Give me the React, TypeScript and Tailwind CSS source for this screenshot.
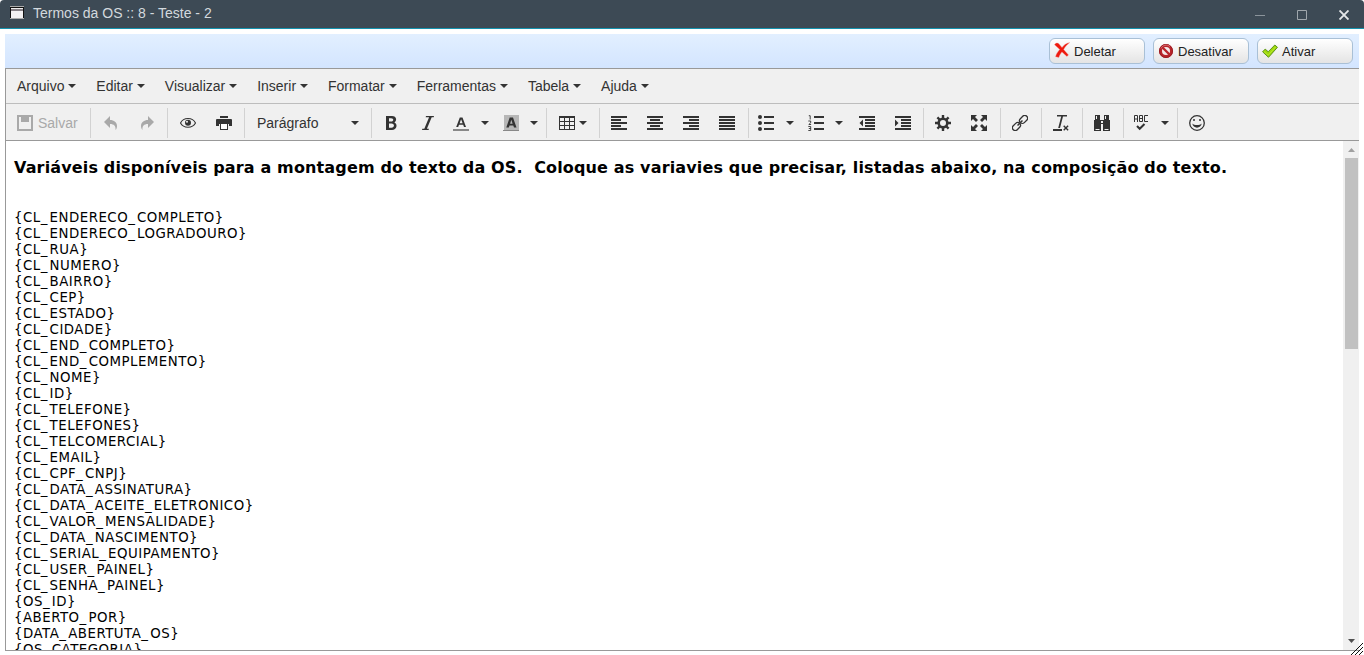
import { Fragment, type ReactNode } from 'react';

const variables = [
  'CL_ENDERECO_COMPLETO', 'CL_ENDERECO_LOGRADOURO', 'CL_RUA', 'CL_NUMERO', 'CL_BAIRRO', 'CL_CEP',
  'CL_ESTADO', 'CL_CIDADE', 'CL_END_COMPLETO', 'CL_END_COMPLEMENTO', 'CL_NOME', 'CL_ID',
  'CL_TELEFONE', 'CL_TELEFONES', 'CL_TELCOMERCIAL', 'CL_EMAIL', 'CL_CPF_CNPJ', 'CL_DATA_ASSINATURA',
  'CL_DATA_ACEITE_ELETRONICO', 'CL_VALOR_MENSALIDADE', 'CL_DATA_NASCIMENTO', 'CL_SERIAL_EQUIPAMENTO',
  'CL_USER_PAINEL', 'CL_SENHA_PAINEL', 'OS_ID', 'ABERTO_POR', 'DATA_ABERTUTA_OS', 'OS_CATEGORIA',
];

const menus = ['Arquivo', 'Editar', 'Visualizar', 'Inserir', 'Formatar', 'Ferramentas', 'Tabela', 'Ajuda'];

function Icon({ children }: { children: ReactNode }) {
  return (
    <svg viewBox="0 0 16 16" className="block h-4 w-4 shrink-0" fill="currentColor">
      {children}
    </svg>
  );
}

function Caret() {
  return (
    <svg viewBox="0 0 8 4" className="block h-1 w-2 shrink-0" fill="currentColor">
      <path d="M0 0h8L4 4z" />
    </svg>
  );
}

function Button({ children, tight }: { children: ReactNode; tight?: boolean }) {
  return (
    <button className={`flex h-[30px] w-9 items-center justify-center ${tight ? 'pr-0.5' : ''}`}>{children}</button>
  );
}

function SplitButton({ children, last }: { children: ReactNode; last?: boolean }) {
  return (
    <div className={`flex h-[30px] items-center pl-[7px] ${last ? 'w-12 gap-[11px]' : 'w-[50px] gap-3'}`}>
      {children}
      <Caret />
    </div>
  );
}

function Group({ children, className = 'px-0.5', end }: { children: ReactNode; className?: string; end?: boolean }) {
  return (
    <div className={`flex h-[30px] items-center ${end ? '' : 'box-content border-r border-[#d2d2d2]'} ${className}`}>
      {children}
    </div>
  );
}

function Action({ icon, label }: { icon: ReactNode; label: string }) {
  return (
    <button className="flex h-[26px] w-24 items-center gap-1 rounded-[6px] border border-[#a9c0d6] bg-linear-to-b from-white to-[#e4e4e4] pl-1 text-[13px] text-[#222]">
      {icon}
      <span className="pt-0.5">{label}</span>
    </button>
  );
}

function Variable({ name }: { name: string }) {
  return (
    <p>
      {`{${name}}`.split('_').map((part, i) => (
        <Fragment key={i}>
          {i > 0 && <span className="tracking-[2.200px]">_</span>}
          {part}
        </Fragment>
      ))}
    </p>
  );
}

export default function App() {
  return (
    <div className="flex h-[655px] w-[1364px] flex-col overflow-hidden bg-white font-['Liberation_Sans',Arial,sans-serif]">
      <header className="flex h-[29px] shrink-0 items-center rounded-t-[4px] border-b border-[#1593ae] bg-[#3d4a55] pr-[15px] pl-[10px] text-[14px] text-[#d3d9de]">
        <svg viewBox="0 0 14 13" className="mt-[-3px] block h-[13px] w-[14px]" shapeRendering="crispEdges">
          <path fill="#111" d="M0 0h14v13H0z" />
          <path fill="#aaa" d="M0 0h14v1H0zM0 12h14v1H0z" />
          <path fill="#eee" d="M1 2h12v1H1z" />
          <path fill="#857f85" d="M1 3h12v2H1z" />
          <path fill="#f2f0f2" d="M1 5h12v7H1z" />
        </svg>
        <h1 className="ml-[9px] flex-1 pb-[2px] whitespace-pre">Termos da OS :: 8 - Teste - 2</h1>
        <svg viewBox="0 0 10 10" className="mt-[2px] block h-[10px] w-[10px]" shapeRendering="crispEdges"><path d="M0 5h10v1H0z" fill="#8b949b" /></svg>
        <svg viewBox="0 0 10 10" className="mt-[2px] ml-8 block h-[10px] w-[10px]"><path d="M.5.5h9v9h-9z" fill="none" stroke="#a0a7ad" /></svg>
        <svg viewBox="0 0 10 10" className="mt-[2px] ml-8 block h-[10px] w-[10px]"><path d="M.5.500l9 9M9.500.5l-9 9" fill="none" stroke="#e4e7e9" strokeWidth="1.900" /></svg>
      </header>

      <main className="relative mt-[5px] ml-[5px] flex h-[617px] w-[1354px] flex-col self-start">
        <div className="flex h-[34px] shrink-0 items-center justify-end gap-2 bg-linear-to-b from-[#e2efff] to-[#d3e5ff] pr-[6px]">
          <Action
            label="Deletar"
            icon={
              <svg viewBox="0 0 16 16" className="mb-0.5 h-4 w-4">
                <path d="M.5 2.800C1.500.5 4.500.6 5.500 2.600l2.500 3C10 3.300 12 1 15.700.6c-2.700 2.200-4.500 4.200-6 6.900l4.800 5.500-1.600 1.500-5-4.600c-1.700 2.200-2.300 3.400-3 5.600L1.500 14.700c.6-2.700 2.200-4.900 4.200-7.300L.5 2.800z" fill="#ee1a0e" stroke="#f4a59c" strokeWidth=".4" />
              </svg>
            }
          />
          <Action
            label="Desativar"
            icon={
              <svg viewBox="0 0 16 16" className="h-4 w-4">
                <circle cx="8" cy="8" r="7" fill="#b9252b" />
                <circle cx="8" cy="8" r="6.500" fill="none" stroke="#9a1c22" />
                <circle cx="8" cy="8" r="4" fill="#f4e9e9" />
                <path d="M4.500 4.500l7 7" stroke="#b9252b" strokeWidth="2.400" />
                <path d="M3 5.500C4.500 2 9 1 12 3.500" fill="none" stroke="#dc7478" strokeWidth="1" />
              </svg>
            }
          />
          <Action
            label="Ativar"
            icon={
              <svg viewBox="0 0 16 16" className="h-4 w-4">
                <path d="M.6 8.800l2.600-2.700 3 2.700 6.600-6.800 2.700 2.300-9 10z" fill="#9fd80c" stroke="#5c941c" strokeLinejoin="round" />
                <path d="M2 8.700l4.200 3.500 7.500-8.300" fill="none" stroke="#bbec35" strokeWidth=".8" />
              </svg>
            }
          />
        </div>

        <section className="flex min-h-0 flex-1 flex-col border-y border-l border-[#999] text-[14px] text-[#333]">
          <nav className="flex h-[35px] shrink-0 items-center gap-[19.900px] border-b border-[#bdbdbd] bg-[#f0f0f0] pl-[11px]">
            {menus.map((m) => (
              <span key={m} className="flex items-center gap-[4px]">
                {m}
                <Caret />
              </span>
            ))}
          </nav>

          <div className="flex h-[37px] shrink-0 items-center border-b border-[#999] bg-[#f0f0f0] pt-1 pb-[2px]">
            <Group className="w-[73px] gap-[5px] pl-[11px] text-[#a9a9a9]">
              <Icon>
                <path fillRule="evenodd" d="M0 0h16v16H0zM2 2v12h12V2h-2v5H4V2z" />
                <path d="M5 2h3v4H5zM10 2h1v4h-1z" />
              </Icon>
              <span>Salvar</span>
            </Group>
            <Group>
              <Button><span className="text-[#a9a9a9]"><Icon><path d="M7 1v4c4 0 7 2.500 7 6 0 1.600-.5 3-1.500 4C13 11 11 9 7 9v4L1 7z" /></Icon></span></Button>
              <Button><span className="text-[#a9a9a9]"><Icon><path d="M9 1v4c-4 0-7 2.500-7 6 0 1.600.5 3 1.500 4C3 11 5 9 9 9v4l6-6z" /></Icon></span></Button>
            </Group>
            <Group>
              <Button>
                <Icon>
                  <path d="M.5 8C3.500 2 12.500 2 15.500 8 12.500 13.600 3.500 13.600.5 8z" fill="none" stroke="currentColor" strokeWidth="1.100" />
                  <circle cx="8" cy="7.700" r="3" />
                  <circle cx="7" cy="6.700" r="1" fill="#f0f0f0" />
                </Icon>
              </Button>
              <Button>
                <Icon>
                  <path fillRule="evenodd" d="M4 1h8v2H4zM1 4h14a1 1 0 011 1v6h-3V9H3v2H0V5a1 1 0 011-1zM4 9h8v6H4z" />
                  <path fill="#fff" d="M5 9h6v5H5z" />
                </Icon>
              </Button>
            </Group>
            <Group className="w-[114px] pl-[12px]">
              <span className="w-[94px]">Parágrafo</span>
              <Caret />
            </Group>
            <Group className="pl-0.5">
              <Button tight><Icon><path fillRule="evenodd" d="M3 1h6c5 0 5 5 2.400 6.500C15 9 14 15 9 15H3zm3 2.200v3.400h2c3 0 3-3.400 0-3.400zm0 5.400v4.200h2.500c3.300 0 3.300-4.200 0-4.200z" /></Icon></Button>
              <Button><Icon><path d="M6 1h8l-.3 1.200h-2L6.900 13.800h2L8.600 15H2l.3-1.200h2L9.100 2.200H5.700z" /></Icon></Button>
              <SplitButton>
                <Icon>
                  <path fillRule="evenodd" d="M6.800 2.500h2.700l3.500 9.500h-2l-.8-2.200H6L5.200 12h-2zm1.300 1.800L6.600 8.300h3z" />
                  <path fill="#888" d="M0 14h16v2H0z" />
                </Icon>
              </SplitButton>
              <SplitButton last>
                <Icon>
                  <path fill="#b7b7b7" d="M1 0h15v15H1z" />
                  <path fillRule="evenodd" d="M6.700 2.500h3.300l3.500 10h-2.500l-.7-2.100H6.500l-.7 2.100H3.300zm1.600 2.300L7.100 8.700h2.500z" />
                  <path fill="#888" d="M0 15h16v1H0z" />
                </Icon>
              </SplitButton>
              <span className="w-0.5" />
            </Group>
            <Group className="w-[40px] gap-[4px] pl-[12px]">
              <Icon><path fillRule="evenodd" d="M0 1h16v14H0zM1 3v3h4V3zm5 0v3h4V3zm5 0v3h4V3zM1 7v3h4V7zm5 0v3h4V7zm5 0v3h4V7zM1 11v3h4v-3zm5 0v3h4v-3zm5 0v3h4v-3z" /></Icon>
              <Caret />
            </Group>
            <Group>
              <Button tight><Icon><path d="M0 1h16v2H0zM0 4h10v2H0zM0 7h16v2H0zM0 10h10v2H0zM0 13h16v2H0z" /></Icon></Button>
              <Button tight><Icon><path d="M0 1h16v2H0zM3 4h10v2H3zM0 7h16v2H0zM3 10h10v2H3zM0 13h16v2H0z" /></Icon></Button>
              <Button tight><Icon><path d="M0 1h16v2H0zM6 4h10v2H6zM0 7h16v2H0zM6 10h10v2H6zM0 13h16v2H0z" /></Icon></Button>
              <Button tight><Icon><path d="M0 1h16v2H0zM0 4h16v2H0zM0 7h16v2H0zM0 10h16v2H0zM0 13h16v2H0z" /></Icon></Button>
            </Group>
            <Group>
              <SplitButton>
                <Icon>
                  <circle cx="2" cy="2" r="2" /><circle cx="2" cy="8" r="2" /><circle cx="2" cy="14" r="2" />
                  <path d="M6 1h10v2H6zM6 7h10v2H6zM6 13h10v2H6z" />
                </Icon>
              </SplitButton>
              <SplitButton last>
                <Icon>
                  <path d="M6 1h10v2H6zM6 7h10v2H6zM6 13h10v2H6z" />
                  <path d="M.8.7h1.400V4.500M.3 6h2.400v1.800L.8 9.500h2.300M.3 11.500h2.400v4H.3M.8 13.500h1.900" fill="none" stroke="currentColor" strokeWidth=".9" />
                </Icon>
              </SplitButton>
              <Button><Icon><path d="M0 1h16v2H0zM6 4h10v2H6zM6 7h10v2H6zM6 10h10v2H6zM0 13h16v2H0zM4 4.500v7L.5 8z" /></Icon></Button>
              <Button><Icon><path d="M0 1h16v2H0zM6 4h10v2H6zM6 7h10v2H6zM6 10h10v2H6zM0 13h16v2H0zM0 4.500v7L3.500 8z" /></Icon></Button>
            </Group>
            <Group>
              <Button tight>
                <Icon>
                  <circle cx="8" cy="8" r="4.300" fill="none" stroke="currentColor" strokeWidth="2.600" />
                  <path d="M8 0v3M8 13v3M0 8h3M13 8h3M2.400 2.400l2.100 2.100M11.500 11.500l2.100 2.100M13.600 2.400l-2.100 2.100M4.500 11.500l-2.100 2.100" stroke="currentColor" strokeWidth="2.400" />
                </Icon>
              </Button>
              <Button tight>
                <Icon>
                  <path d="M0 0h6L4 2l3 3-2 2-3-3-2 2zM16 0v6l-2-2-3 3-2-2 3-3-2-2zM0 16v-6l2 2 3-3 2 2-3 3 2 2zM16 16h-6l2-2-3-3 2-2 3 3 2-2z" />
                </Icon>
              </Button>
            </Group>
            <Group>
              <Button tight>
                <Icon>
                  <g fill="none" stroke="currentColor" strokeWidth="1.300" transform="rotate(-45 8 8)">
                    <rect x="-1.500" y="5.200" width="9" height="5.600" rx="2.800" />
                    <rect x="8.500" y="5.200" width="9" height="5.600" rx="2.800" />
                    <path d="M4.500 8h7" strokeWidth="1.500" />
                  </g>
                </Icon>
              </Button>
            </Group>
            <Group>
              <Button tight>
                <Icon><path d="M4 0h10v1.500H10L7 13H5.200L8.200 1.500H4zM0 14h9v2H0zM11.200 10.300l1.700 1.700 1.700-1.700 1 1-1.700 1.700 1.700 1.700-1 1-1.700-1.700-1.700 1.700-1-1 1.700-1.700-1.700-1.700z" /></Icon>
              </Button>
            </Group>
            <Group>
              <Button tight>
                <Icon><path fillRule="evenodd" d="M1 0h5v5h4V0h5v5h1v11H9V9H7v7H0V5h1zm1 1v3h1V1zm9 0v3h1V1zM1.500 14v1h4v-1zm9 0v1h4v-1zM7 6v2h2V6z" /></Icon>
              </Button>
            </Group>
            <Group className="w-[44px] gap-[12px] pl-[9px]">
              <Icon>
                <path d="M1.500 7V.5h3V7M1.500 4h3M6.500.5h3V6.500h-3zM6.500 3.500h3M15 .5h-3.500v6H15" fill="none" stroke="currentColor" />
                <path d="M4 11l2.700 2.800L11.500 9" fill="none" stroke="currentColor" strokeWidth="2" />
              </Icon>
              <Caret />
            </Group>
            <Group end>
              <Button tight>
                <Icon>
                  <circle cx="8" cy="8" r="7.300" fill="none" stroke="currentColor" strokeWidth="1.300" />
                  <circle cx="5" cy="5" r="1" /><circle cx="11" cy="5" r="1" />
                  <path d="M3.300 8.500c2 2 7.400 2 9.400 0C12 14 4 14 3.300 8.500z" />
                </Icon>
              </Button>
            </Group>
          </div>

          <div className="flex min-h-0 flex-1 overflow-hidden">
            <article className="flex-1 overflow-hidden pl-2 font-['DejaVu_Sans',Verdana,sans-serif] text-black">
              <h2 className="mt-[17px] h-5 text-[16px] leading-5 font-bold tracking-[0.146px] whitespace-pre">{'Variáveis disponíveis para a montagem do texto da OS.  Coloque as variavies que precisar, listadas abaixo, na composição do texto.'}</h2>
              <div className="mt-8 text-[13.330px] leading-4 tracking-[0.500px]">
                {variables.map((v) => <Variable key={v} name={v} />)}
              </div>
            </article>
            <aside className="flex w-4 shrink-0 flex-col items-center bg-[#f0f0f0] py-[7px]">
              <svg viewBox="0 0 7 4" className="block h-1 w-[7px]" fill="#a0a0a0"><path d="M0 4h7L3.500 0z" /></svg>
              <div className="mt-[6px] h-[191px] w-[13px] bg-[#c1c1c1]" />
              <svg viewBox="0 0 7 4" className="mt-auto block h-1 w-[7px]" fill="#505050"><path d="M0 0h7L3.500 4z" /></svg>
            </aside>
          </div>
        </section>
        <svg viewBox="0 0 12 12" className="absolute right-[-4px] bottom-[-4px] h-3 w-3" shapeRendering="crispEdges">
          <path d="M0 12L12 0M4 12l8-8M8 12l4-4" stroke="#111" strokeWidth="1.200" />
        </svg>
      </main>
    </div>
  );
}
